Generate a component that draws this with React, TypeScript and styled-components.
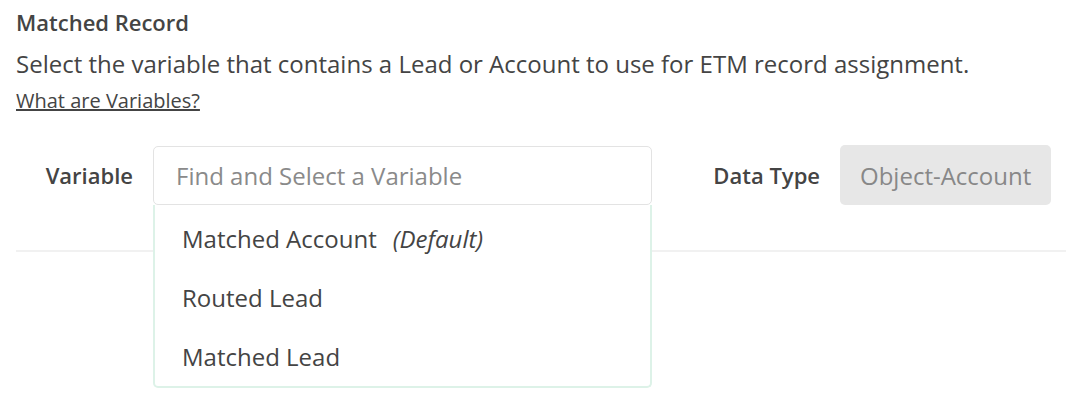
import styled, { createGlobalStyle } from "styled-components";

const GlobalStyle = createGlobalStyle`
  body {
    margin: 0;
    background: #ffffff;
    font-family: "Open Sans", "Noto Sans", sans-serif;
    color: #444444;
  }
`;

const Page = styled.div`
  box-sizing: border-box;
  min-height: 100vh;
  padding: 8px 0 0 16px;
`;

const Heading = styled.h3`
  margin: 0;
  font-size: 22px;
  font-weight: 600;
  line-height: 28px;
  color: #444444;
`;

const Description = styled.p`
  margin: 12px 0 0;
  font-size: 24px;
  line-height: 32px;
  color: #444444;
`;

const LinkLine = styled.div`
  margin-top: 8px;
  font-size: 20px;
  line-height: 26px;
`;

const HelpLink = styled.a`
  color: #444444;
  text-decoration: underline;
  cursor: pointer;
`;

const FieldRow = styled.div`
  display: flex;
  align-items: center;
  margin-top: 31px;
  padding-right: 15px;
`;

const Label = styled.label<{ $width: number }>`
  width: ${(p) => p.$width}px;
  flex-shrink: 0;
  text-align: right;
  font-size: 22px;
  font-weight: 600;
  color: #444444;
  margin-right: 20px;
`;

const SelectWrap = styled.div`
  position: relative;
  width: 499px;
  flex-shrink: 0;
`;

const Input = styled.input`
  box-sizing: border-box;
  display: block;
  width: 100%;
  height: 59px;
  padding: 0 22px;
  border: 1px solid #e3e3e3;
  border-radius: 5px;
  font-family: inherit;
  font-size: 24px;
  color: #444444;
  outline: none;

  &::placeholder {
    color: #8a8a8a;
  }
`;

const Menu = styled.ul`
  position: absolute;
  top: 100%;
  left: 0;
  right: 0;
  box-sizing: border-box;
  margin: 0;
  padding: 4px 0 0;
  list-style: none;
  background: #ffffff;
  border: 2px solid #ddf2e8;
  border-top: none;
  border-radius: 0 0 5px 5px;
  z-index: 2;
`;

const MenuItem = styled.li`
  height: 59px;
  display: flex;
  align-items: center;
  padding: 0 27px;
  font-size: 24px;
  color: #444444;
  cursor: pointer;
`;

const Hint = styled.em`
  margin-left: 16px;
  font-style: italic;
`;

const TypeBadge = styled.div`
  display: flex;
  align-items: center;
  flex-shrink: 0;
  white-space: nowrap;
  height: 60px;
  padding: 0 20px;
  margin-left: auto;
  border-radius: 5px;
  background: #e7e7e7;
  color: #888888;
  font-size: 24px;
`;

const Divider = styled.hr`
  margin: 45px 0 0;
  border: none;
  border-top: 2px solid #f1f1f1;
`;

const options = [
  { name: "Matched Account", hint: "(Default)" },
  { name: "Routed Lead" },
  { name: "Matched Lead" },
];

export default function App() {
  return (
    <Page>
      <GlobalStyle />
      <Heading>Matched Record</Heading>
      <Description>
        Select the variable that contains a Lead or Account to use for ETM record assignment.
      </Description>
      <LinkLine>
        <HelpLink>What are Variables?</HelpLink>
      </LinkLine>
      <FieldRow>
        <Label $width={117}>Variable</Label>
        <SelectWrap>
          <Input placeholder="Find and Select a Variable" readOnly />
          <Menu>
            {options.map((o) => (
              <MenuItem key={o.name}>
                {o.name}
                {o.hint && <Hint>{o.hint}</Hint>}
              </MenuItem>
            ))}
          </Menu>
        </SelectWrap>
        <Label $width={168}>Data Type</Label>
        <TypeBadge>Object-Account</TypeBadge>
      </FieldRow>
      <Divider />
    </Page>
  );
}
